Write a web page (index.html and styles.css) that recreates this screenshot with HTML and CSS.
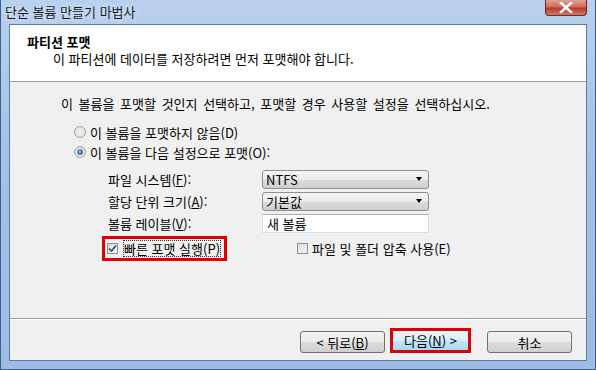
FILE: index.html
```html
<!DOCTYPE html>
<html lang="ko">
<head>
    <meta charset="UTF-8">
    <title>단순 볼륨 만들기 마법사</title>
    <link rel="stylesheet" href="styles.css">
</head>
<body>
<div class="window">
    <div class="titlebar">
        <span class="title">단순 볼륨 만들기 마법사</span>
        <span class="close">
            <svg width="14" height="11" viewBox="0 0 14 11">
                <path d="M2 1 L12 10 M12 1 L2 10" stroke="#fff" stroke-width="2.6" stroke-linecap="square"/>
            </svg>
        </span>
    </div>
    <div class="client">
        <div class="header">
            <div class="header-title">파티션 포맷</div>
            <div class="header-sub">이 파티션에 데이터를 저장하려면 먼저 포맷해야 합니다.</div>
        </div>

        <div class="content">
            <p class="intro">이 볼륨을 포맷할 것인지 선택하고, 포맷할 경우 사용할 설정을 선택하십시오.</p>

            <div class="option">
                <span class="radio"></span>
                <span>이 볼륨을 포맷하지 않음(D)</span>
            </div>
            <div class="option">
                <span class="radio checked"></span>
                <span>이 볼륨을 다음 설정으로 포맷(O):</span>
            </div>

            <div class="fields">
                <span class="field-label">파일 시스템(<u>F</u>):</span>
                <div class="select"><span>NTFS</span><span class="arrow"></span></div>

                <span class="field-label">할당 단위 크기(<u>A</u>):</span>
                <div class="select"><span>기본값</span><span class="arrow"></span></div>

                <span class="field-label">볼륨 레이블(<u>V</u>):</span>
                <div class="textbox">새 볼륨</div>
            </div>

            <div class="checks">
                <div class="mark">
                    <span class="checkbox checked">
                        <svg width="9" height="9" viewBox="0 0 9 9">
                            <path d="M1 4.5 L3.5 7 L8 1.5" fill="none" stroke="#2d4b8a" stroke-width="1.6"/>
                        </svg>
                    </span>
                    <span class="focus">빠른 포맷 실행(P)</span>
                </div>
                <div class="check-compress">
                    <span class="checkbox"></span>
                    <span>파일 및 폴더 압축 사용(E)</span>
                </div>
            </div>
        </div>

        <div class="footer">
            <button class="btn">&lt; 뒤로(<u>B</u>)</button>
            <div class="mark-btn">
                <button class="btn btn-default">다음(<u>N</u>) &gt;</button>
            </div>
            <button class="btn btn-cancel">취소</button>
        </div>
    </div>
</div>
</body>
</html>
```

FILE: styles.css
```css
body {
    margin: 0;
    font-family: "Noto Sans CJK KR", "Liberation Sans", sans-serif;
    font-size: 13px;
    color: #000;
}
.window {
    width: 596px;
    height: 370px;
    box-sizing: border-box;
    display: flex;
    flex-direction: column;
    padding: 0 8px 8px 8px;
    background: linear-gradient(to bottom, #b9d1ee, #a4c2e7 40%, #9dbce4 100%);
    border: 1px solid #3e5f8d;
    border-top: none;
}
.titlebar {
    height: 24px;
    display: flex;
    justify-content: space-between;
    align-items: flex-start;
    margin-left: -4px;
}
.title {
    line-height: 24px;
    color: #1a1a1a;
    text-shadow: 0 0 6px #e8f1fb;
}
.close {
    width: 42px;
    height: 16px;
    box-sizing: border-box;
    display: flex;
    align-items: center;
    justify-content: center;
    border: 1px solid #6f2a28;
    border-top: none;
    border-radius: 0 0 4px 4px;
    background: linear-gradient(to bottom, #e3a195, #cf6a5b 45%, #b8392a 55%, #d07a66);
}
.client {
    flex: 1;
    display: flex;
    flex-direction: column;
    background: #f0f0f0;
    border: 1px solid #5a7ba8;
}
.header {
    height: 57px;
    box-sizing: border-box;
    background: #fff;
    border-bottom: 1px solid #a0a0a0;
    padding: 8px 0 0 17px;
}
.header-title {
    font-weight: bold;
    line-height: 17px;
}
.header-sub {
    line-height: 17px;
    padding-left: 26px;
}
.content {
    flex: 1;
    padding: 13px 0 0 51px;
}
.intro {
    margin: 0 0 10px 0;
    line-height: 17px;
    word-spacing: 2px;
}
.option {
    display: flex;
    align-items: center;
    gap: 4px;
    height: 20px;
    padding-left: 13px;
}
.radio {
    width: 12px;
    height: 12px;
    box-sizing: border-box;
    border-radius: 50%;
    border: 1px solid #a2a2a2;
    background: radial-gradient(circle, #f4f4f4, #dcdcdc);
    position: relative;
}
.radio.checked::after {
    content: "";
    position: absolute;
    left: 2px;
    top: 2px;
    width: 6px;
    height: 6px;
    border-radius: 50%;
    background: radial-gradient(circle at 40% 40%, #8fb0dc, #20457e);
}
.fields {
    display: grid;
    grid-template-columns: 154px 167px;
    grid-auto-rows: 22px;
    align-items: center;
    margin: 6px 0 0 47px;
}
.select {
    height: 19px;
    box-sizing: border-box;
    display: flex;
    justify-content: space-between;
    align-items: center;
    padding: 0 6px 0 3px;
    border: 1px solid #8e8f8f;
    border-radius: 3px;
    background: linear-gradient(to bottom, #f3f3f3, #ebebeb 50%, #dddddd 51%, #cfcfcf);
}
.arrow {
    width: 0;
    height: 0;
    border-left: 3px solid transparent;
    border-right: 3px solid transparent;
    border-top: 4px solid #000;
}
.textbox {
    height: 19px;
    box-sizing: border-box;
    line-height: 17px;
    padding-left: 4px;
    background: #fff;
    border: 1px solid #dbdfe6;
    border-top-color: #abadb3;
}
.checks {
    display: flex;
    align-items: center;
    margin: 2px 0 0 41px;
}
.mark {
    width: 125px;
    height: 25px;
    box-sizing: border-box;
    border: 3px solid #e00000;
    display: flex;
    align-items: center;
    gap: 6px;
    padding-left: 2px;
}
.checkbox {
    width: 11px;
    height: 11px;
    box-sizing: border-box;
    display: flex;
    align-items: center;
    justify-content: center;
    border: 1px solid #8e8f8f;
    background: linear-gradient(135deg, #dcdcdc, #f6f6f6);
}
.focus {
    outline: 1px dotted #333;
    line-height: 15px;
}
.check-compress {
    display: flex;
    align-items: center;
    gap: 4px;
    margin-left: 70px;
}
.footer {
    height: 42px;
    box-sizing: border-box;
    display: flex;
    align-items: flex-end;
    justify-content: flex-end;
    padding: 0 14px 7px 0;
    border-top: 1px solid #a0a0a0;
    box-shadow: inset 0 1px 0 #fff;
}
.btn {
    width: 85px;
    height: 22px;
    padding: 0;
    font-family: inherit;
    font-size: 13px;
    color: #000;
    border: 1px solid #707070;
    border-radius: 3px;
    background: linear-gradient(to bottom, #f2f2f2, #ebebeb 50%, #dddddd 51%, #cfcfcf);
}
.mark-btn {
    width: 81px;
    height: 25px;
    box-sizing: border-box;
    border: 3px solid #e00000;
    margin: 0 16px 0 5px;
}
.btn-default {
    width: 75px;
    height: 19px;
    border: none;
    border-radius: 0;
    background: linear-gradient(to bottom, #e5f4fc, #d9f0fc 50%, #bee6fd 51%, #a7d9f5);
}
```
